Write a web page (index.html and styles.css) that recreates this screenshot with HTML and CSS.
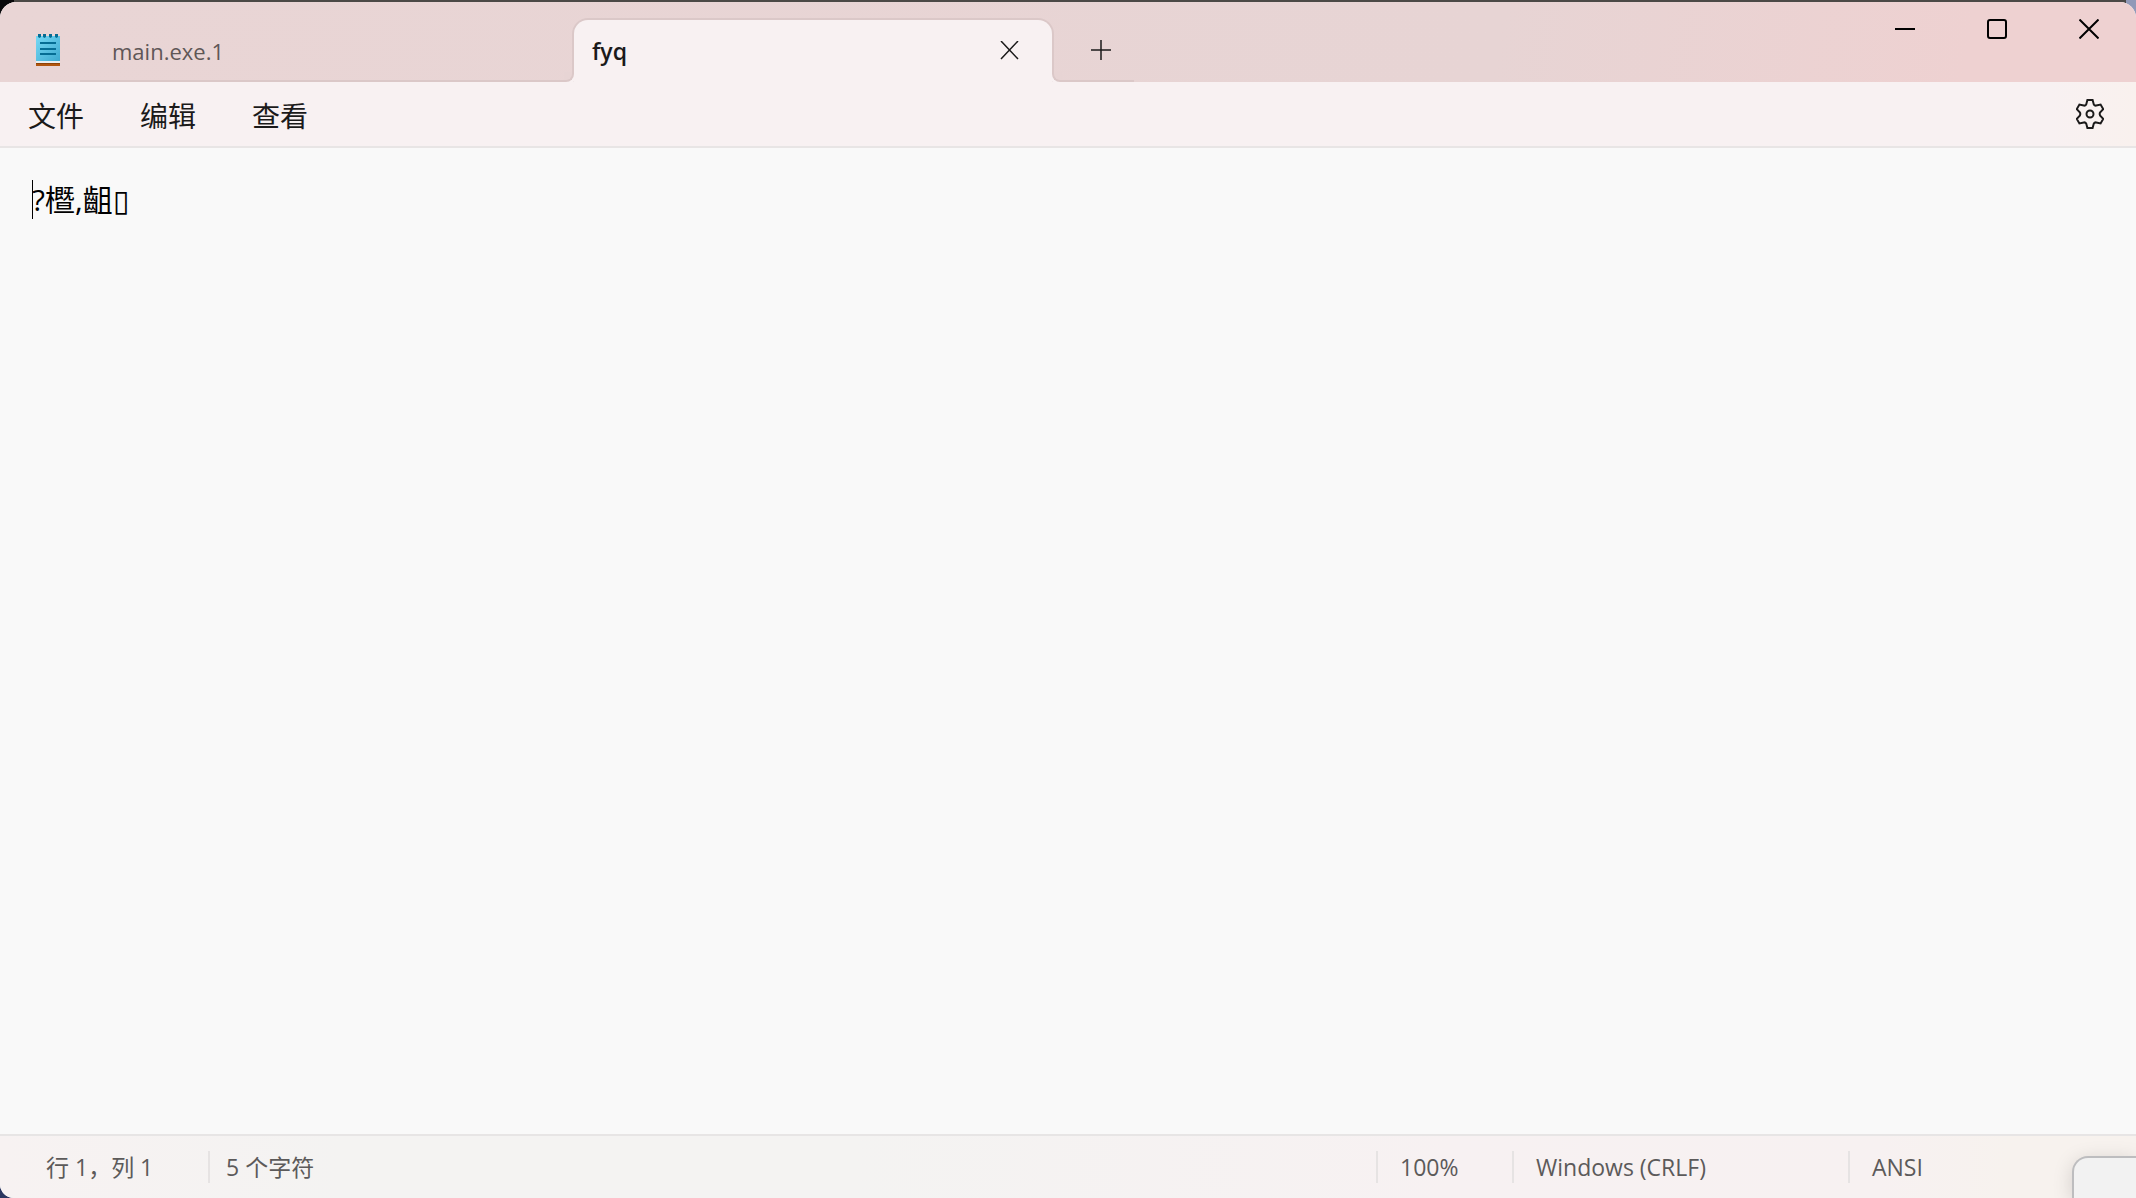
FILE: index.html
```html
<!DOCTYPE html>
<html lang="zh-CN">
<head>
    <meta charset="UTF-8">
    <meta name="viewport" content="width=device-width, initial-scale=1.0">
    <title>fyq</title>
    <link rel="stylesheet" href="styles.css">
</head>
<body>
    <div class="backdrop"></div>
    <div class="window">
        <header class="titlebar">
            <svg class="app-icon" viewBox="0 0 24 32" aria-hidden="true">
                <defs>
                    <linearGradient id="pad" x1="0" y1="0" x2="1" y2="1">
                        <stop offset="0" stop-color="#77d9f5"/>
                        <stop offset="1" stop-color="#3da9cf"/>
                    </linearGradient>
                </defs>
                <rect x="0" y="29" width="24" height="3" fill="#b1560f"/>
                <rect x="0" y="27" width="24" height="2" fill="#e9eef0"/>
                <rect x="0" y="29" width="24" height="1" fill="#8c4209"/>
                <rect x="0" y="2" width="24" height="25" fill="url(#pad)"/>
                <path d="M2 0h3v3l-1.500 1L2 3zM7 0h3v3l-1.500 1L7 3zM13 0h3v3l-1.500 1L13 3zM19 0h3v3l-1.500 1L19 3z" fill="#056d94"/>
                <path d="M4 9h16M4 15h16M4 20h16" stroke="#056d94" stroke-width="2"/>
            </svg>
            <nav class="tabs">
                <button class="tab">main.exe.1</button>
                <div class="tab tab-active">
                    <span class="tab-name">fyq</span>
                    <button class="icon-btn" aria-label="关闭标签页">
                        <svg width="20" height="20" viewBox="0 0 20 20"><path d="M1 0l17 18M18 0L1 18"/></svg>
                    </button>
                </div>
                <button class="new-tab" aria-label="新建标签页">
                    <svg width="20" height="20" viewBox="0 0 20 20"><path d="M10 0v20M0 10h20"/></svg>
                </button>
            </nav>
            <div class="controls">
                <button aria-label="最小化">
                    <svg width="20" height="20" viewBox="0 0 20 20"><path d="M0 10h20"/></svg>
                </button>
                <button aria-label="最大化">
                    <svg width="20" height="20" viewBox="0 0 20 20"><rect x="1" y="1" width="18" height="18" rx="2"/></svg>
                </button>
                <button aria-label="关闭">
                    <svg width="20" height="20" viewBox="0 0 20 20"><path d="M0.500 0.500l19 19M19.500 0.500l-19 19"/></svg>
                </button>
            </div>
        </header>

        <nav class="menubar">
            <button class="menu">文件</button>
            <button class="menu">编辑</button>
            <button class="menu">查看</button>
            <button class="settings" aria-label="设置">
                <svg width="28" height="30" viewBox="-14 -15 28 30">
                    <path d="M-2.600 -14H2.600L3.800 -9.600Q4.600 -8.200 6.200 -8.400L10.600 -9.400L13.200 -4.900L10.200 -1.700Q9.200 0 10.200 1.700L13.200 4.900L10.600 9.400L6.200 8.400Q4.600 8.200 3.800 9.600L2.600 14H-2.600L-3.800 9.600Q-4.600 8.200 -6.200 8.400L-10.600 9.400L-13.200 4.900L-10.200 1.700Q-9.200 0 -10.200 -1.700L-13.200 -4.900L-10.600 -9.400L-6.200 -8.400Q-4.600 -8.200 -3.800 -9.600Z"/>
                    <circle r="3.500"/>
                </svg>
            </button>
        </nav>

        <main class="editor">
            <span class="caret"></span>
            <textarea class="text" aria-label="文本编辑器" spellcheck="false">?櫭,齟▯</textarea>
        </main>

        <footer class="status">
            <span class="cell position">行 1，列 1</span>
            <span class="cell count">5 个字符</span>
            <span class="cell zoom">100%</span>
            <span class="cell eol">Windows (CRLF)</span>
            <span class="cell encoding">ANSI</span>
        </footer>
        <div class="popup"></div>
    </div>
</body>
</html>
```
FILE: styles.css
```css
*,
*::before,
*::after {
    box-sizing: border-box;
}
body {
    margin: 0;
    height: 100vh;
    padding-top: 2px;
    overflow: hidden;
    font-family: "Open Sans", "Noto Sans CJK SC", sans-serif;
    color: #1b1a1a;
    background: linear-gradient(90deg, #08080a 0, #08080a 14px, #4b4946 14px, #4b4946 calc(100% - 10px), #9199b8 calc(100% - 10px));
}
button {
    padding: 0;
    border: 0;
    background: none;
    font: inherit;
    color: inherit;
}
svg {
    display: block;
    fill: none;
    stroke: #1b1a1a;
    stroke-width: 2;
}
.backdrop {
    position: absolute;
    left: 0;
    bottom: 0;
    width: 20px;
    height: 20px;
    background: #2b3660;
}
.window {
    position: relative;
    display: flex;
    flex-direction: column;
    height: 100%;
    border-radius: 16px 16px 0 14px;
    overflow: hidden;
    background: #f9f9f9;
}

/* title bar */
.titlebar {
    display: flex;
    height: 80px;
    background: linear-gradient(100deg, #e9d5d5 0, #e7d4d4 70%, #eed1d1 92%);
}
.app-icon {
    width: 24px;
    height: 32px;
    margin: 32px 20px 0 36px;
    stroke: none;
}
.tabs {
    display: flex;
    align-items: flex-end;
    border-bottom: 2px solid #dbc8c8;
}
.tab {
    width: 492px;
    height: 60px;
    padding: 2px 32px 0;
    text-align: left;
    font-size: 22px;
    color: #5f5757;
}
.tab-active {
    position: relative;
    z-index: 1;
    display: flex;
    align-items: center;
    justify-content: space-between;
    width: 482px;
    height: 64px;
    margin-bottom: -2px;
    padding: 0 32px 0 18px;
    border: 2px solid #dbc8c8;
    border-bottom: 0;
    border-radius: 16px 16px 0 0;
    background: #f8f1f2;
    color: #1b1a1a;
}
.tab-active::before,
.tab-active::after {
    content: "";
    position: absolute;
    bottom: 0;
    width: 10px;
    height: 10px;
    border-bottom: 2px solid #dbc8c8;
    background: #e7d4d4;
}
.tab-active::before {
    left: -10px;
    border-right: 2px solid #dbc8c8;
    border-bottom-right-radius: 8px;
    box-shadow: 2px 2px 0 #f8f1f2;
}
.tab-active::after {
    right: -10px;
    border-left: 2px solid #dbc8c8;
    border-bottom-left-radius: 8px;
    box-shadow: -2px 2px 0 #f8f1f2;
}
.tab-name {
    font-size: 23px;
    font-weight: 600;
}
.tab svg,
.new-tab svg {
    stroke-width: 1.5;
}
.new-tab {
    width: 80px;
    height: 60px;
    padding-left: 37px;
}
.controls {
    display: flex;
    height: 54px;
    margin-left: auto;
}
.controls button {
    width: 92px;
    padding-left: 35px;
}
.controls svg {
    stroke: #000;
}

/* menu bar */
.menubar {
    position: relative;
    display: flex;
    align-items: center;
    height: 66px;
    flex: none;
    border-bottom: 2px solid #e8e5e5;
    background: linear-gradient(90deg, #f8f1f2 96%, #f9f1ee);
}
.menu {
    padding: 2px 28px 0;
    font-size: 28px;
}
.settings {
    margin: 0 32px 0 auto;
}

/* text area */
.editor {
    position: relative;
    flex: 1;
    display: flex;
}
.caret {
    position: absolute;
    left: 32px;
    top: 32px;
    width: 1px;
    height: 39px;
    background: #000;
}
.text {
    flex: 1;
    padding: 32px;
    border: 0;
    outline: 0;
    resize: none;
    background: none;
    font-family: "Open Sans", "Noto Sans CJK SC", "DejaVu Sans", sans-serif;
    font-size: 30px;
    line-height: 40px;
    color: #000;
}

/* status bar */
.status {
    display: flex;
    align-items: center;
    flex: none;
    height: 64px;
    border-top: 2px solid #e7e5e5;
    background: linear-gradient(90deg, #f7f2f2 0, #f4f3f2 16%, #f4f3f2 40%, #f7f1f2 68%, #f7f1f1 88%, #f7f2ee 94%);
    font-size: 23px;
    color: #5c5a5a;
}
.cell {
    height: 32px;
    line-height: 32px;
    white-space: nowrap;
}
.cell + .cell {
    padding-left: 22px;
    border-left: 2px solid #e6e3e3;
}
.position {
    width: 208px;
    padding-left: 46px;
}
.cell.count {
    flex: 1;
    padding-left: 16px;
}
.zoom {
    width: 136px;
}
.eol {
    width: 336px;
}
.encoding {
    width: 288px;
}

/* corner of the window lying above */
.popup {
    position: absolute;
    right: 0;
    bottom: 0;
    width: 64px;
    height: 42px;
    border: 2px solid #bdbdbf;
    border-right: 0;
    border-bottom: 0;
    border-radius: 16px 0 0 0;
    background: #f2f2f2;
    box-shadow: 0 4px 20px rgba(0, 0, 0, 0.15);
}
```
